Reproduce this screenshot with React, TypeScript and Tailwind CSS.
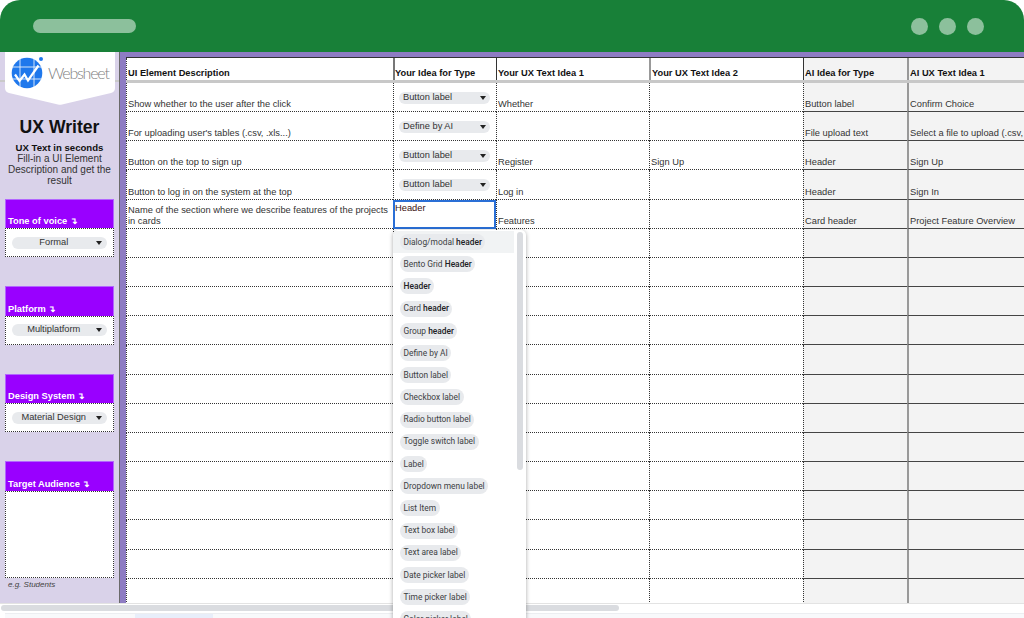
import React from "react";

const rowsData: { d?: string; type?: string; t1?: string; t2?: string; ait?: string; ai1?: string }[] = [
  { d: "Show whether to the user after the click", type: "Button label", t1: "Whether", ait: "Button label", ai1: "Confirm Choice" },
  { d: "For uploading user's tables (.csv, .xls...)", type: "Define by AI", ait: "File upload text", ai1: "Select a file to upload (.csv," },
  { d: "Button on the top to sign up", type: "Button label", t1: "Register", t2: "Sign Up", ait: "Header", ai1: "Sign Up" },
  { d: "Button to log in on the system at the top", type: "Button label", t1: "Log in", ait: "Header", ai1: "Sign In" },
  { d: "Name of the section where we describe features of the projects in cards", t1: "Features", ait: "Card header", ai1: "Project Feature Overview" },
  ...Array.from({ length: 13 }, () => ({})),
];

const options: [string, string][] = [
  ["Dialog/modal ", "header"],
  ["Bento Grid ", "Header"],
  ["", "Header"],
  ["Card ", "header"],
  ["Group ", "header"],
  ["Define by AI", ""],
  ["Button label", ""],
  ["Checkbox label", ""],
  ["Radio button label", ""],
  ["Toggle switch label", ""],
  ["Label", ""],
  ["Dropdown menu label", ""],
  ["List Item", ""],
  ["Text box label", ""],
  ["Text area label", ""],
  ["Date picker label", ""],
  ["Time picker label", ""],
  ["Color picker label", ""],
];

function Caret() {
  return <span className="w-0 h-0 border-x-[3.5px] border-x-transparent border-t-[4px] border-t-[#222]" />;
}

function SideBlock({ title, value, gap }: { title: string; value?: string; gap: string }) {
  return (
    <div className={`mx-[5px] w-[108.5px] ${gap}`}>
      <div className="h-[29.2px] bg-[#9900ff] border border-[#b266ff] border-b-0 flex items-end px-[2px] pb-[1px] text-white font-bold text-[9.3px] leading-[12px]">
        <span>{title} <span className="text-[9px]">↴</span></span>
      </div>
      <div className="h-[29.2px] bg-white border border-dotted border-[#333] flex items-center px-[6px]">
        <div className="w-[95px] h-[12px] rounded-full bg-[#e8eaed] flex items-center pr-[5px] text-[9.3px] text-[#333]">
          <span className="flex-1 text-center">{value}</span>
          <Caret />
        </div>
      </div>
    </div>
  );
}

function HeadCell({ w, text, cls }: { w: string; text: string; cls: string }) {
  return (
    <div className={`${w} shrink-0 h-full flex items-end pb-[1px] font-bold text-[#111] text-[9.3px] leading-[12px] whitespace-nowrap overflow-hidden ${cls}`}>
      {text}
    </div>
  );
}

function Cell({ w, text, cls }: { w: string; text?: string; cls: string }) {
  return (
    <div className={`${w} shrink-0 h-full flex items-end pl-[1px] pb-[1px] text-[#333] text-[9.3px] leading-[11px] overflow-hidden ${cls}`}>
      {text ? <span className="whitespace-pre-wrap">{text}</span> : null}
    </div>
  );
}

export default function App() {
  return (
    <div className="relative w-[1024px] h-[618px] bg-white overflow-hidden font-['Liberation_Sans',Arial,sans-serif]">
      <header className="h-[52px] bg-[#188038] rounded-t-[20px] flex items-center justify-between pl-[33px] pr-[40px]">
        <div className="w-[103px] h-[14px] rounded-full bg-white/50" />
        <div className="flex gap-[11px]">
          <div className="w-[17px] h-[17px] rounded-full bg-white/50" />
          <div className="w-[17px] h-[17px] rounded-full bg-white/50" />
          <div className="w-[17px] h-[17px] rounded-full bg-white/50" />
        </div>
      </header>

      <div className="flex h-[551px] overflow-hidden">
        {/* sidebar */}
        <aside className="relative w-[119px] shrink-0 bg-[#d9d2e9] text-center">
          <div className="h-[30px] border-b-2 border-[#c9c9c9]" />
          <div className="absolute left-[5px] top-0 w-[110px] h-[53px]">
            <svg className="absolute inset-0" width="110" height="53" viewBox="0 0 110 53">
              <path d="M0 0H110V36Q110 40 106 41L57 52.5Q55 53 53 52.5L4 41Q0 40 0 36Z" fill="#fff" />
              <circle cx="22" cy="21" r="15.3" fill="#1f78ec" />
              <g stroke="#e6f0fd" strokeWidth="0.9" fill="none">
                <path d="M7 15H37M7 27H37M15 7V35M29 7V35" />
              </g>
              <path d="M10 22.5L14.5 29L19.5 22.5L23 28.5L33.5 13.5" stroke="#fff" strokeWidth="2.2" fill="none" />
              <circle cx="36" cy="7" r="2" fill="#1f78ec" />
            </svg>
            <span className="absolute left-[43px] top-[11px] text-[16px] leading-[20px] font-light tracking-[-1.2px] text-[#7f7f7f] font-['Lato','Liberation_Sans',sans-serif]">
              Websheet
            </span>
          </div>

          <h1 className="mt-[33px] text-[17.6px] leading-[24px] font-bold text-[#111]">UX Writer</h1>
          <div className="mt-[3px] px-[5px] text-[10px] leading-[11px] text-[#333]">
            <p className="font-bold text-[9.6px] text-[#111]">UX Text in seconds</p>
            <p>Fill-in a UI Element Description and get the result</p>
          </div>

          <div className="mt-[13px] text-left">
            <SideBlock title="Tone of voice" value="Formal" gap="" />
            <SideBlock title="Platform" value="Multiplatform" gap="mt-[29px]" />
            <SideBlock title="Design System" value="Material Design" gap="mt-[29px]" />
            <div className="mx-[5px] w-[108.5px] mt-[29px]">
              <div className="h-[30px] bg-[#9900ff] border border-[#b266ff] border-b-0 flex items-end px-[2px] pb-[1px] text-white font-bold text-[9.3px] leading-[12px]">
                <span>Target Audience <span className="text-[9px]">↴</span></span>
              </div>
              <div className="h-[87px] bg-white border border-dotted border-[#333]" />
              <p className="mt-[2px] pl-[3px] italic text-[8px] leading-[10px] text-[#444]">e.g. Students</p>
            </div>
          </div>
        </aside>

        {/* sheet */}
        <div className="flex-1 min-w-0 border-l border-[#6a6a6a] bg-[#8e7cc3]">
          <div className="h-[5px]" />
          <div className="ml-[6px] h-[546px] bg-white overflow-hidden">
            <div className="h-[26px] flex border-t border-[#333] border-b-[3px] border-b-[#c8c8c8]">
              <HeadCell w="w-[267px]" text="UI Element Description" cls="pl-[1px] border-l border-dotted border-l-[#333]" />
              <HeadCell w="w-[103px]" text="Your Idea for Type" cls="border-l-2 border-l-[#777]" />
              <HeadCell w="w-[153px]" text="Your UX Text Idea 1" cls="pl-[1px] border-l border-l-[#333]" />
              <HeadCell w="w-[154px]" text="Your UX Text Idea 2" cls="pl-[1px] border-l-2 border-l-[#999]" />
              <HeadCell w="w-[104px]" text="AI Idea for Type" cls="pl-[1px] border-l border-l-[#333] bg-[#f3f3f3]" />
              <HeadCell w="w-[120px]" text="AI UX Text Idea 1" cls="pl-[1px] border-l-2 border-l-[#999] bg-[#f3f3f3]" />
            </div>
            {rowsData.map((r, i) => (
              <div key={i} className="h-[29.17px] flex">
                <Cell w="w-[267px]" text={r.d} cls="border-l border-b border-dotted border-[#333]" />
                {i === 4 ? (
                  <div className="w-[103px] shrink-0 h-full pt-[1px] border-2 border-[#2a6fd6] text-[9.3px] leading-[11px] text-[#3a1010]">Header</div>
                ) : (
                  <div className="w-[103px] shrink-0 h-full flex items-center pl-[5px] pt-[1px] border-l border-b border-dotted border-[#333]">
                    {r.type ? (
                      <div className="w-[91px] h-[12px] rounded-full bg-[#e8eaed] flex items-center justify-between pl-[4px] pr-[4px] text-[9.3px] text-[#333]">
                        <span>{r.type}</span>
                        <Caret />
                      </div>
                    ) : null}
                  </div>
                )}
                <Cell w="w-[153px]" text={r.t1} cls="border-l border-b border-dotted border-[#333]" />
                <Cell w="w-[154px]" text={r.t2} cls="border-l border-b border-dotted border-[#333]" />
                <Cell w="w-[104px]" text={r.ait} cls="border-l border-l-[#333] [border-left-style:dotted] border-b border-b-[#444] bg-[#f3f3f3]" />
                <div className="w-[120px] shrink-0 h-full flex items-end pl-[1px] pb-[1px] text-[#333] text-[9.3px] leading-[11px] whitespace-nowrap overflow-hidden border-l-2 border-l-[#999] border-b border-b-[#444] bg-[#f3f3f3]">
                  {r.ai1}
                </div>
              </div>
            ))}
          </div>
        </div>
      </div>

      {/* bottom scroll area */}
      <div className="h-[15px] border-t border-[#e3e3e3] bg-white pt-[1px]">
        <div className="ml-[1px] w-[618px] h-[6px] rounded-full bg-[#dadce0]" />
        <div className="mt-[2px] ml-[5px] h-[5px] bg-[#f8f9fb] border-t border-[#eceef1]">
          <div className="ml-[130px] w-[78px] h-full bg-[#e8eefa]" />
        </div>
      </div>

      {/* open dropdown */}
      <div className="absolute left-[393px] top-[230px] w-[133px] h-[400px] pt-[1px] bg-white rounded-t-[5px] shadow-[0_1px_4px_rgba(0,0,0,0.35)] overflow-hidden font-['Roboto',sans-serif]">
        <div className="absolute right-[3px] top-[2px] w-[6px] h-[238px] rounded-full bg-[#dadce0]" />
        <div className="w-[121px] flex flex-col">
          {options.map(([a, b], i) => (
            <div key={i} className={`h-[22.2px] flex items-center pl-[7px] shrink-0 ${i === 0 ? "bg-[#f1f3f4]" : ""}`}>
              <span className="h-[16px] rounded-full bg-[#e8eaed] px-[3.5px] flex items-center text-[8.4px] text-[#3c4043] whitespace-pre">
                {a}
                {b ? <b className="font-medium text-[#202124]">{b}</b> : null}
              </span>
            </div>
          ))}
        </div>
      </div>
    </div>
  );
}
